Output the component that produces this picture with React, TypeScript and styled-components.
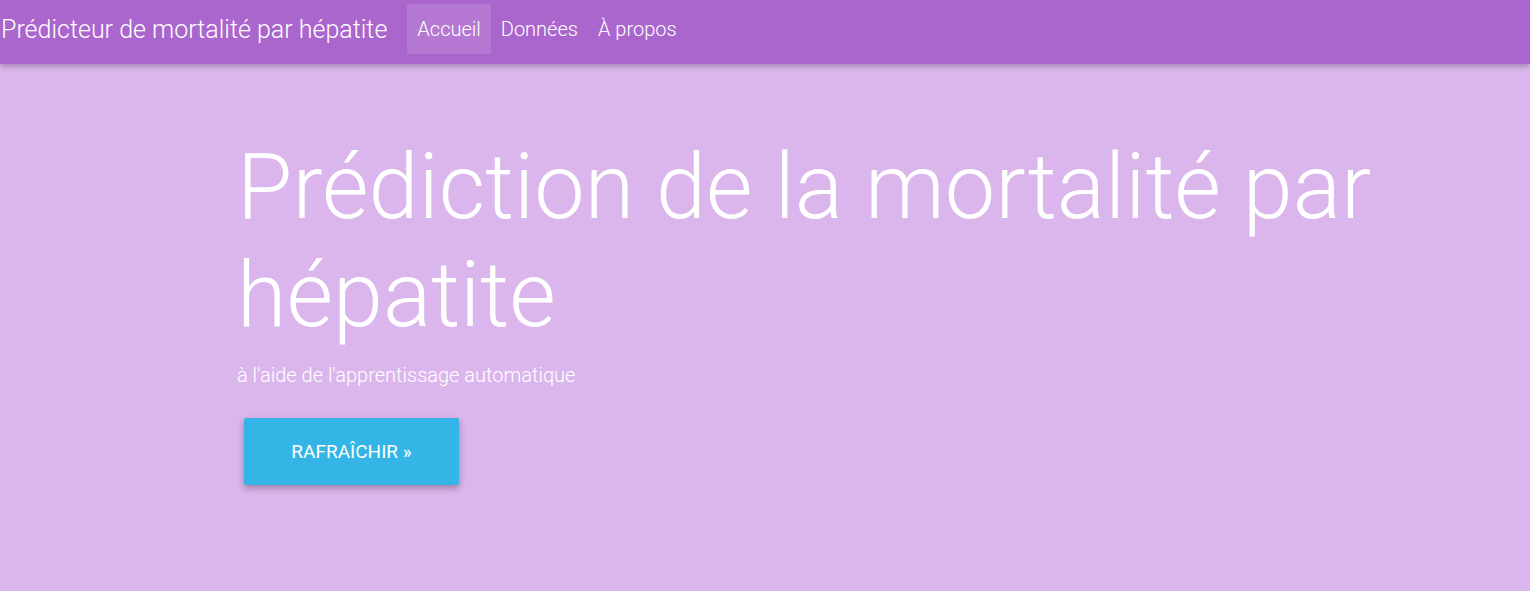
import React from "react";
import styled, { createGlobalStyle } from "styled-components";

const Global = createGlobalStyle`
  html, body { margin: 0; padding: 0; }
  body {
    background: #dbb6ec;
    font-family: Roboto, "Noto Sans", Arial, sans-serif;
    color: #fff;
    min-height: 591px;
  }
`;

const Navbar = styled.nav`
  height: 64px;
  background: #aa66cc;
  display: flex;
  align-items: flex-start;
  box-shadow: 0 2px 6px rgba(0, 0, 0, 0.28);
  position: relative;
  z-index: 1;
`;

const Brand = styled.a`
  font-size: 25px;
  font-weight: 300;
  line-height: 60px;
  padding: 0 20px 0 1px;
  color: #fff;
  text-decoration: none;
  white-space: nowrap;
`;

const NavList = styled.ul`
  display: flex;
  list-style: none;
  margin: 4px 0 0;
  padding: 0;
`;

const NavItem = styled.li<{ $active?: boolean }>`
  height: 50px;
  padding: 0 10px;
  display: flex;
  align-items: center;
  font-size: 20px;
  font-weight: 300;
  color: #fff;
  background: ${(p) => (p.$active ? "rgba(255,255,255,0.12)" : "transparent")};
`;

const Jumbotron = styled.section`
  padding: 70px 0 0 237px;
`;

const Title = styled.h1`
  margin: 0;
  font-size: 90px;
  font-weight: 300;
  line-height: 108px;
  color: #fff;
`;

const Lead = styled.p`
  margin: 11px 0 0;
  font-size: 20px;
  font-weight: 300;
  line-height: 28px;
`;

const Button = styled.button`
  margin: 29px 0 0 7px;
  width: 215px;
  height: 67px;
  border: none;
  border-radius: 2px;
  background: #33b5e5;
  color: #fff;
  font-family: Roboto, "Noto Sans", Arial, sans-serif;
  font-size: 19px;
  font-weight: 400;
  text-transform: uppercase;
  box-shadow: 0 3px 6px rgba(0, 0, 0, 0.2), 0 3px 8px rgba(0, 0, 0, 0.12);
  cursor: pointer;
`;

export default function App() {
  return (
    <>
      <Global />
      <Navbar>
        <Brand>Prédicteur de mortalité par hépatite</Brand>
        <NavList>
          <NavItem $active>Accueil</NavItem>
          <NavItem>Données</NavItem>
          <NavItem>À propos</NavItem>
        </NavList>
      </Navbar>
      <Jumbotron>
        <Title>Prédiction de la mortalité par hépatite</Title>
        <Lead>à l'aide de l'apprentissage automatique</Lead>
        <Button>Rafraîchir »</Button>
      </Jumbotron>
    </>
  );
}
